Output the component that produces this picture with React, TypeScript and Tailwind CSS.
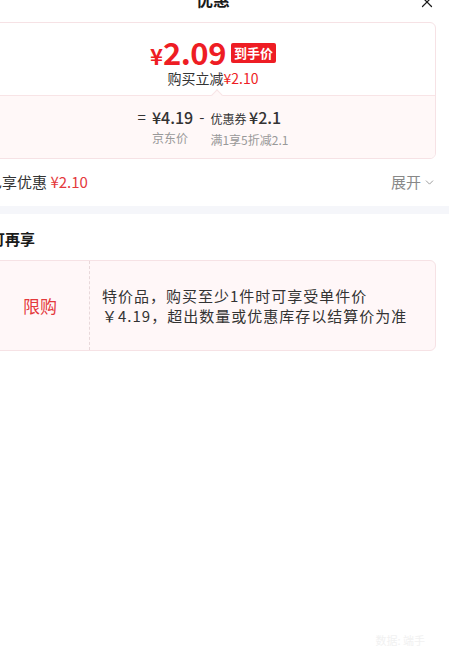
import { X, ChevronDown } from "lucide-react";

const FONT = { fontFamily: '"Noto Sans CJK SC", "Noto Sans", sans-serif' };

export default function App() {
  return (
    <div
      style={FONT}
      className="relative h-[662px] w-[449px] overflow-hidden bg-white text-[#1a1a1a]"
    >
      <div className="-ml-[23px] w-[472px]">
        {/* header, partly scrolled out of view */}
        <header className="relative -mt-[20px] flex h-[36px] items-center justify-center">
          <h1 className="text-[17px] font-bold leading-none">优惠</h1>
          <X className="absolute right-[13px] top-[13px] size-[18px]" strokeWidth={1.6} />
        </header>

        <div className="mx-[13px] mt-[6px] overflow-hidden rounded-[6px] border border-[#f6e2e5]">
          <div className="flex h-[72px] flex-col items-center pt-[12px]">
            <div className="flex h-[32px] items-center leading-none">
              <span className="text-[#ee1d24]">
                <span className="text-[22px] font-semibold">¥</span>
                <span className="text-[31px] font-semibold tracking-[-0.5px]">2.09</span>
              </span>
              <span className="ml-[5px] mt-[4px] rounded-[2px] bg-[#ee1d24] px-[3px] text-[13px] font-bold leading-[20px] text-white">
                到手价
              </span>
            </div>
            <p className="mt-[2px] text-[14px] leading-[18px] text-[#333]">
              购买立减<span className="text-[#ee1d24]">¥2.10</span>
            </p>
          </div>

          <div className="relative flex h-[63px] justify-center border-t border-[#f8e4e6] bg-[#fff8f8] pt-[10px]">
            <span className="absolute -top-[5px] left-[222px] size-[8px] rotate-45 border-l border-t border-[#f8e4e6] bg-[#fff8f8]" />
            <div className="flex items-start text-[#333]">
              <span className="mr-[6px] text-[15px] leading-[22px]">=</span>
              <div className="flex flex-col">
                <span className="text-[16px] font-medium leading-[22px]">¥4.19</span>
                <span className="text-[12px] leading-[20px] text-[#999]">京东价</span>
              </div>
              <span className="mx-[6px] text-[15px] leading-[22px]">-</span>
              <div className="flex flex-col">
                <span className="leading-[22px]">
                  <span className="text-[12px]">优惠券 </span>
                  <span className="text-[16px] font-medium">¥2.1</span>
                </span>
                <span className="text-[12px] leading-[20px] text-[#999]">满1享5折减2.1</span>
              </div>
            </div>
          </div>
        </div>

        <div className="flex h-[47px] items-center justify-between pl-[10px] pr-[13px] text-[15px] text-[#333]">
          <span>
            已享优惠 <span className="text-[#e4393c]">¥2.10</span>
          </span>
          <span className="flex items-center gap-[2px] text-[#888]">
            展开
            <ChevronDown className="size-[13px]" strokeWidth={1.5} />
          </span>
        </div>

        <div className="h-[8px] bg-[#f5f6fa]" />

        <h2 className="flex h-[46px] items-center px-[13px] pt-[5px] text-[15px] font-bold">可再享</h2>

        <div className="mx-[13px] flex h-[91px] rounded-[6px] border border-[#f6e2e5] bg-[#fff7f8]">
          <div className="flex w-[99px] shrink-0 items-center justify-center border-r border-dashed border-[#e8d8da] text-[17px] text-[#e4393c]">
            限购
          </div>
          <p className="flex items-center pl-[12px] text-[15px] leading-[20px] tracking-[1px] text-[#333]">
            <span>
              特价品，购买至少1件时可享受单件价
              <br />
              ￥4.19，超出数量或优惠库存以结算价为准
            </span>
          </p>
        </div>
      </div>

      <span className="absolute bottom-[14px] right-[24px] text-[11px] text-[#f1f1f1]">数据: 端手</span>
    </div>
  );
}
